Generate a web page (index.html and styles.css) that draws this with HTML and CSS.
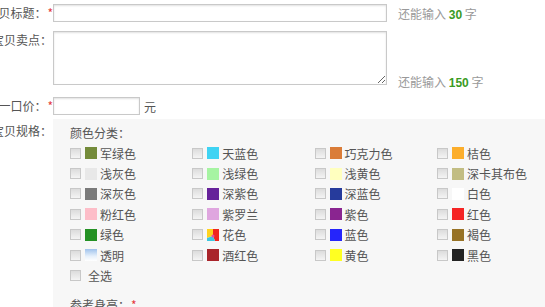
FILE: index.html
```html
<!DOCTYPE html>
<html>
<head>
<meta charset="utf-8">
<title>宝贝信息</title>
<link rel="stylesheet" href="styles.css">
</head>
<body>
<form class="item-form">
  <div class="row row-title">
    <div class="label">宝贝标题：<span class="req">*</span></div>
    <input class="text long" type="text">
    <span class="hint">还能输入 <b>30</b> 字</span>
  </div>

  <div class="row row-points">
    <div class="label">宝贝卖点：<span class="req"></span></div>
    <textarea class="area"></textarea>
    <span class="hint hint-bottom">还能输入 <b>150</b> 字</span>
  </div>

  <div class="row row-price">
    <div class="label">一口价：<span class="req">*</span></div>
    <input class="text short" type="text">
    <span class="unit">元</span>
  </div>

  <div class="row row-spec">
    <div class="label">宝贝规格：<span class="req"></span></div>
    <div class="spec-panel">
      <div class="spec-title">颜色分类：</div>
      <div class="colors">
        <label class="color"><input type="checkbox"><i class="sw" style="background:#748b3a"></i>军绿色</label>
        <label class="color"><input type="checkbox"><i class="sw" style="background:#3fd3f3"></i>天蓝色</label>
        <label class="color"><input type="checkbox"><i class="sw" style="background:#da7c38"></i>巧克力色</label>
        <label class="color"><input type="checkbox"><i class="sw" style="background:#fcae2c"></i>桔色</label>

        <label class="color"><input type="checkbox"><i class="sw" style="background:#e8e8e8"></i>浅灰色</label>
        <label class="color"><input type="checkbox"><i class="sw" style="background:#a6f4a2"></i>浅绿色</label>
        <label class="color"><input type="checkbox"><i class="sw" style="background:#ffffbf"></i>浅黄色</label>
        <label class="color"><input type="checkbox"><i class="sw" style="background:#c2bd83"></i>深卡其布色</label>

        <label class="color"><input type="checkbox"><i class="sw" style="background:#7a7a7a"></i>深灰色</label>
        <label class="color"><input type="checkbox"><i class="sw" style="background:#66229a"></i>深紫色</label>
        <label class="color"><input type="checkbox"><i class="sw" style="background:#263b9c"></i>深蓝色</label>
        <label class="color"><input type="checkbox"><i class="sw" style="background:#ffffff"></i>白色</label>

        <label class="color"><input type="checkbox"><i class="sw" style="background:#fdbdc8"></i>粉红色</label>
        <label class="color"><input type="checkbox"><i class="sw" style="background:#dfa6df"></i>紫罗兰</label>
        <label class="color"><input type="checkbox"><i class="sw" style="background:#8a2590"></i>紫色</label>
        <label class="color"><input type="checkbox"><i class="sw" style="background:#f52424"></i>红色</label>

        <label class="color"><input type="checkbox"><i class="sw" style="background:#249124"></i>绿色</label>
        <label class="color"><input type="checkbox"><i class="sw flower"><svg viewBox="0 0 12 12" width="12" height="12"><rect width="12" height="12" fill="#fff"/><path d="M0 0H6V7L0 9Z" fill="#ffd21e"/><path d="M6 0H12V12H8L6 7Z" fill="#f0261e"/><path d="M0 9L6 7L8 12H0Z" fill="#3ec7e0"/><circle cx="6" cy="7" r="1.5" fill="#e34fa0"/></svg></i>花色</label>
        <label class="color"><input type="checkbox"><i class="sw" style="background:#2525fb"></i>蓝色</label>
        <label class="color"><input type="checkbox"><i class="sw" style="background:#977226"></i>褐色</label>

        <label class="color"><input type="checkbox"><i class="sw clear"></i>透明</label>
        <label class="color"><input type="checkbox"><i class="sw" style="background:#a9252b"></i>酒红色</label>
        <label class="color"><input type="checkbox"><i class="sw" style="background:#ffff22"></i>黄色</label>
        <label class="color"><input type="checkbox"><i class="sw" style="background:#232323"></i>黑色</label>

        <label class="color all"><input type="checkbox">全选</label>
      </div>
      <div class="spec-title next">参考身高：<span class="req">*</span></div>
    </div>
  </div>
</form>
</body>
</html>
```

FILE: styles.css
```css
html, body { margin:0; padding:0; background:#fff; overflow:hidden; }
body { font-family:"Noto Sans CJK SC", "Noto Sans", sans-serif; font-size:12px; color:#444; }

.item-form { padding-top:4px; }

.row { display:flex; align-items:flex-start; }
.row-title { align-items:center; height:18px; }
.row-points { margin-top:9px; }
.row-price { margin-top:12px; align-items:center; height:18px; }
.row-spec { margin-top:4px; }

/* label column: text overflows to the left like the cropped original */
.label { width:53px; flex:none; display:flex; justify-content:flex-end;
         white-space:nowrap; line-height:18px; color:#555; }
.req { display:inline-block; width:13px; color:#e4393c; text-align:left; padding-left:1px;
       box-sizing:border-box; }
.row-spec .label { margin-top:3px; }

.text, .area { border:1px solid #c9c9c9; box-shadow:inset 0 1px 2px rgba(0,0,0,.12);
               box-sizing:border-box; padding:0 3px; margin:0; font:inherit; background:#fff; }
.text { height:18px; }
.long { width:334px; }
.short { width:87px; }
.area { width:334px; height:54px; resize:both; }

.hint { margin-left:11px; color:#999; white-space:nowrap; }
.hint b { color:#3a9b24; font-family:"Liberation Sans", Arial, sans-serif; font-size:12px; }
.hint-bottom { align-self:flex-end; margin-bottom:-5px; }
.unit { margin-left:4px; color:#555; }

.spec-panel { flex:1; background:#f7f7f7; padding:4px 0 20px 17px; min-height:200px; }
.spec-title { line-height:20px; color:#555; }
.spec-title.next { margin-top:9px; }

.colors { display:grid; grid-template-columns:repeat(4, 122.3px); grid-auto-rows:20.4px;
          margin-top:0; }
.color { display:flex; align-items:center; white-space:nowrap; color:#555; }
.color input { -webkit-appearance:none; appearance:none; margin:0 4px 0 0; width:11px; height:11px;
               border:1px solid #c8c8c8; background:linear-gradient(#dcdcdc, #f4f4f4);
               box-sizing:border-box; }
.sw { display:block; width:12px; height:12px; margin-right:3px; flex:none; box-sizing:border-box; }
.sw svg { display:block; }
.clear { background:linear-gradient(#9fc2ec, #e6f0fb 60%, #fff); }
.all { grid-column:1 / span 4; }
.all input { margin-right:7px; }
```
